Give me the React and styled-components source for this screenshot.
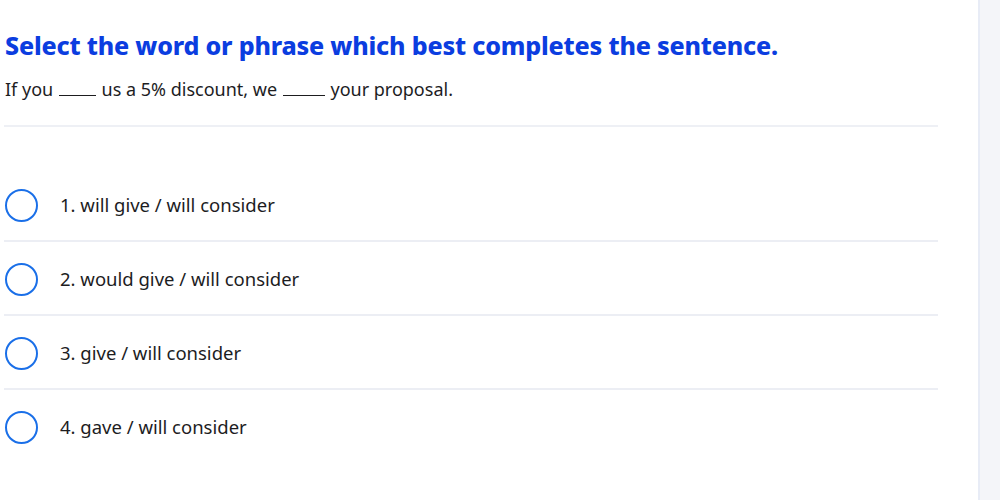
import React from "react";
import styled, { createGlobalStyle } from "styled-components";

const GlobalStyle = createGlobalStyle`
  html, body {
    margin: 0;
    padding: 0;
    background: #ffffff;
    font-family: "Noto Sans", Lato, sans-serif;
  }
`;

const options = [
  "1. will give / will consider",
  "2. would give / will consider",
  "3. give / will consider",
  "4. gave / will consider",
];

class App extends React.Component {
  render() {
    return (
      <Page>
        <GlobalStyle />
        <Main>
          <Heading>Select the word or phrase which best completes the sentence.</Heading>
          <Question>
            If you <Blank $w={37} /> us a 5% discount, we <Blank $w={42} /> your proposal.
          </Question>
          <Divider />
          <List>
            {options.map((text, number) => (
              <Option key={number}>
                <Radio />
                <OptionText>{text}</OptionText>
              </Option>
            ))}
          </List>
        </Main>
        <Side />
      </Page>
    );
  }
}

const Page = styled.div`
  display: flex;
  width: 1000px;
  height: 500px;
  overflow: hidden;
`;

const Main = styled.div`
  width: 938px;
  padding: 0 0 0 4px;
  margin-right: 40px;
  box-sizing: border-box;
`;

const Heading = styled.h1`
  margin: 29px 0 0 1px;
  font-size: 25px;
  font-weight: 800;
  line-height: 33px;
  color: #0b3de0;
  letter-spacing: -0.18px;
`;

const Question = styled.p`
  margin: 15px 0 0 1px;
  font-size: 18px;
  line-height: 24px;
  color: #1d1d1f;
`;

const Blank = styled.span`
  display: inline-block;
  width: ${(p) => p.$w}px;
  border-bottom: 1px solid #1d1d1f;
  vertical-align: baseline;
  margin: 0 1px;
`;

const Divider = styled.hr`
  margin: 24px 0 0 0;
  border: 0;
  border-top: 2px solid #eef0f5;
`;

const List = styled.div`
  margin-top: 41px;
`;

const Option = styled.div`
  display: flex;
  align-items: center;
  height: 72px;
  border-bottom: 2px solid #eceef4;

  &:last-child {
    border-bottom: none;
  }
`;

const Radio = styled.span`
  width: 29px;
  height: 29px;
  border: 2.5px solid #1a6fe8;
  border-radius: 50%;
  flex-shrink: 0;
  margin: 2px 0 0 1px;
`;

const OptionText = styled.span`
  margin-left: 22px;
  font-size: 18.5px;
  color: #1d1d1f;
`;

const Side = styled.div`
  flex: 1;
  background: #f4f5f9;
  border-left: 2px solid #e8ecf6;
`;

export default App;
